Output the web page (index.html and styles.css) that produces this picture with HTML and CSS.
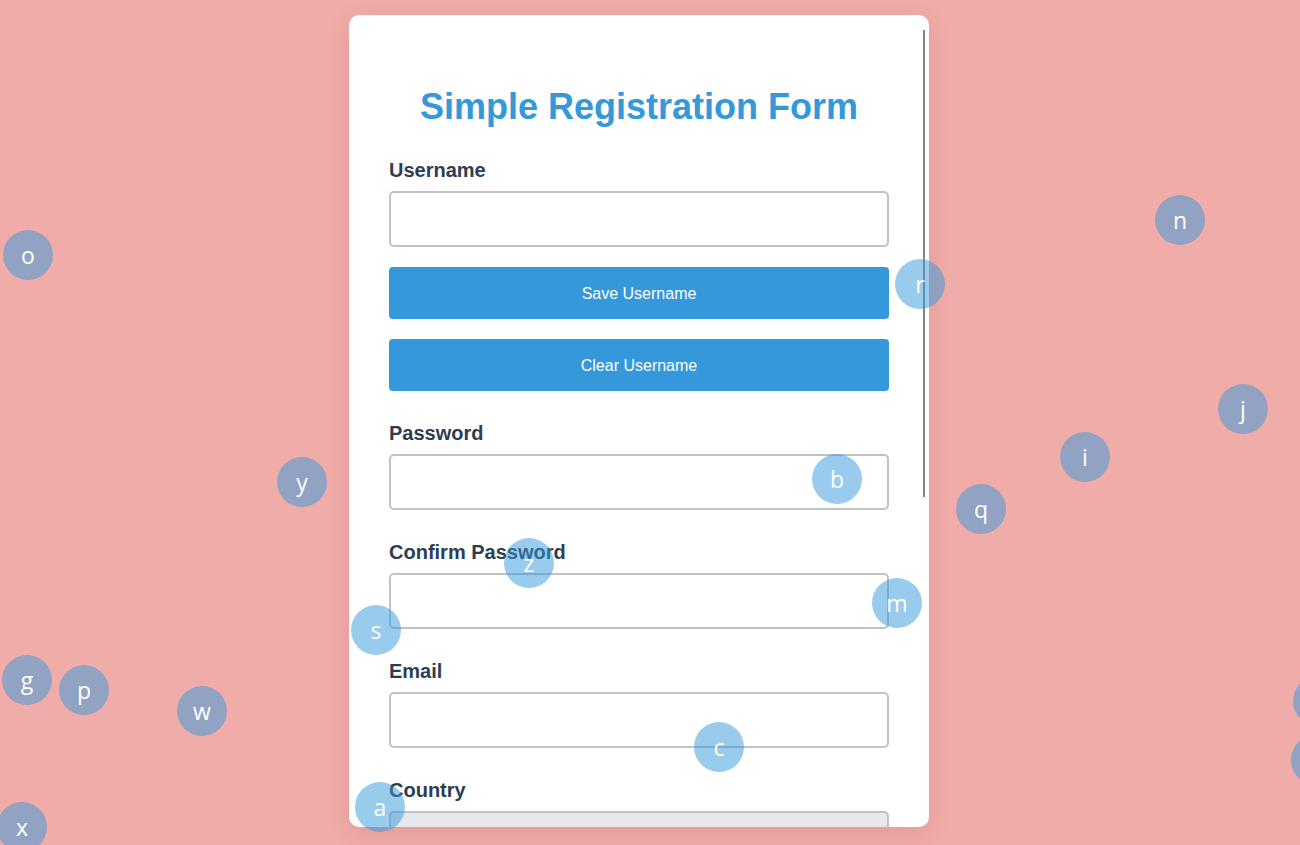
FILE: index.html
```html
<!DOCTYPE html>
<html lang="en">
<head>
<meta charset="utf-8">
<title>Simple Registration Form</title>
<link rel="stylesheet" href="styles.css">
</head>
<body>
<div class="card">
  <h1 class="title">Simple Registration Form</h1>
  <div class="group">
    <label class="label" for="username">Username</label>
    <input class="field" id="username" type="text">
    <button class="btn" type="button">Save Username</button>
    <button class="btn" type="button">Clear Username</button>
  </div>
  <div class="group">
    <label class="label" for="password">Password</label>
    <input class="field" id="password" type="password">
  </div>
  <div class="group">
    <label class="label" for="confirm">Confirm Password</label>
    <input class="field" id="confirm" type="password">
  </div>
  <div class="group">
    <label class="label" for="email">Email</label>
    <input class="field" id="email" type="email">
  </div>
  <div class="group">
    <label class="label" for="country">Country</label>
    <select class="field select" id="country"><option></option></select>
  </div>
  <div class="thumb"></div>
</div>

<div class="bubble" style="left:3px;top:230px">o</div>
<div class="bubble" style="left:1155px;top:195px">n</div>
<div class="bubble" style="left:895px;top:259px">r</div>
<div class="bubble" style="left:1218px;top:384px">j</div>
<div class="bubble" style="left:1060px;top:432px">i</div>
<div class="bubble" style="left:277px;top:457px">y</div>
<div class="bubble" style="left:812px;top:454px">b</div>
<div class="bubble" style="left:956px;top:484px">q</div>
<div class="bubble" style="left:504px;top:538px">z</div>
<div class="bubble" style="left:872px;top:578px">m</div>
<div class="bubble" style="left:351px;top:605px">s</div>
<div class="bubble" style="left:2px;top:655px">g</div>
<div class="bubble" style="left:59px;top:665px">p</div>
<div class="bubble" style="left:177px;top:686px">w</div>
<div class="bubble" style="left:694px;top:722px">c</div>
<div class="bubble" style="left:355px;top:782px">a</div>
<div class="bubble" style="left:-3px;top:802px">x</div>
<div class="bubble" style="left:1293px;top:676px">d</div>
<div class="bubble" style="left:1291px;top:735px">e</div>
</body>
</html>
```

FILE: styles.css
```css
html, body {
  margin: 0;
  padding: 0;
  height: 100%;
  overflow: hidden;
}

body {
  background: #f0aca8;
  font-family: "Liberation Sans", Arial, sans-serif;
  position: relative;
}

.card {
  position: relative;
  box-sizing: border-box;
  width: 580px;
  height: 812px;
  margin: 15px 0 0 349px;
  padding: 40px 40px 0;
  background: #ffffff;
  border-radius: 10px;
  box-shadow: 0 6px 24px rgba(120, 40, 40, 0.12);
  overflow: hidden;
}

.title {
  margin: 31px 0 31px;
  font-size: 36px;
  line-height: 41px;
  font-weight: bold;
  color: #3498db;
  text-align: center;
}

.group {
  display: flex;
  flex-direction: column;
  margin-bottom: 30px;
}

.label {
  display: block;
  font-size: 20px;
  line-height: 25px;
  font-weight: bold;
  color: #2c3e50;
  margin-bottom: 8px;
}

.field {
  box-sizing: border-box;
  width: 100%;
  height: 56px;
  margin: 0;
  padding: 0 14px;
  border: 2px solid #bdc3c7;
  border-radius: 5px;
  background: #ffffff;
  font-family: "Liberation Sans", Arial, sans-serif;
  font-size: 18px;
  outline: none;
}

.select {
  background: #e8e8ec;
  appearance: none;
  -webkit-appearance: none;
}

.btn {
  box-sizing: border-box;
  width: 100%;
  height: 52px;
  margin-top: 20px;
  padding: 2px 0 0;
  border: none;
  border-radius: 4px;
  background: #3498db;
  color: #ffffff;
  font-family: "Liberation Sans", Arial, sans-serif;
  font-size: 16px;
  cursor: pointer;
}

.thumb {
  position: absolute;
  top: 15px;
  right: 4px;
  width: 2px;
  height: 467px;
  background: #858585;
}

.bubble {
  position: absolute;
  z-index: 10;
  width: 50px;
  height: 50px;
  border-radius: 50%;
  background: rgba(52, 152, 219, 0.5);
  color: #ffffff;
  font-family: "Open Sans", "Noto Sans", sans-serif;
  font-size: 23px;
  display: flex;
  align-items: center;
  justify-content: center;
  line-height: 1;
}
```
